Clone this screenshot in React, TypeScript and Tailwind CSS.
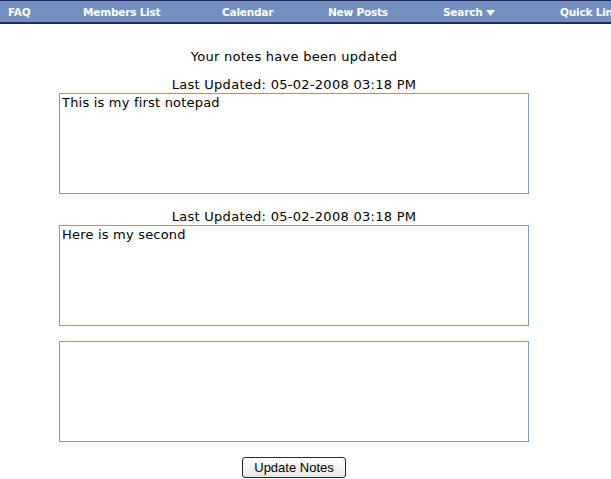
import React from 'react';

const navItems = [
  { label: 'FAQ', w: 'w-[75px]' },
  { label: 'Members List', w: 'w-[139px]' },
  { label: 'Calendar', w: 'w-[106px]' },
  { label: 'New Posts', w: 'w-[115px]' },
  { label: 'Search', w: 'w-[117px]', caret: true },
  { label: 'Quick Links', w: 'w-[80px]' },
];

const notes = [
  { updated: '05-02-2008 03:18 PM', text: 'This is my first notepad' },
  { updated: '05-02-2008 03:18 PM', text: 'Here is my second' },
  { updated: null, text: '' },
];

export default function App() {
  return (
    <div className="w-[611px] h-[479px] overflow-hidden bg-white font-['DejaVu_Sans',sans-serif] text-[13px] text-black">
      {/* nav bar */}
      <div className="h-[24px] border-t border-b-2 border-[#1f2d5c] bg-[#7490c1] flex items-center pl-[8px] pt-[2px] whitespace-nowrap overflow-hidden">
        {navItems.map((n) => (
          <div key={n.label} className={`${n.w} shrink-0 text-[10.5px] font-bold text-white flex items-center gap-[4px] tracking-[-0.2px]`}>
            {n.label}
            {n.caret && (
              <svg width="9" height="6" viewBox="0 0 9 6">
                <path d="M0 0 H9 L4.5 6 Z" fill="white" />
              </svg>
            )}
          </div>
        ))}
      </div>

      <div className="w-[588px] flex flex-col items-center tracking-[0.28px]">
        <div className="mt-[24px] leading-[17px]">Your notes have been updated</div>

        <div className="mt-[12px] flex flex-col items-center">
          {notes.map((n, i) => (
            <div key={i} className={`flex flex-col items-center ${i > 0 ? 'mt-[15px]' : ''}`}>
              {n.updated && <div className="leading-[16px]">Last Updated: {n.updated}</div>}
              <textarea
                defaultValue={n.text}
                className="w-[470px] h-[101px] border border-[#7f9db9] px-[2px] pt-[1px] resize-none outline-none leading-[15px] font-['DejaVu_Sans',sans-serif] text-[13px] tracking-[0.2px] overflow-hidden"
              />
            </div>
          ))}
        </div>

        <button className="mt-[15px] w-[104px] h-[21px] rounded-[3px] border border-[#2a2a2a] bg-gradient-to-b from-white to-[#e6e6e6] font-['Liberation_Sans',sans-serif] text-[13px] leading-[19px] tracking-normal">
          Update Notes
        </button>
      </div>
    </div>
  );
}
